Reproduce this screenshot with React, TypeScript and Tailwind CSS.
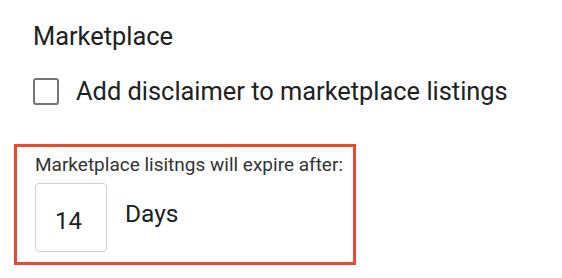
export default function App() {
  return (
    <div className="w-[562px] h-[278px] bg-white font-['Roboto','Liberation_Sans',sans-serif] text-[#212121]">
      <div className="pl-[33px] pt-[22px]">
        <h2 className="text-[25.4px] leading-[28px] font-normal">Marketplace</h2>
        <label className="mt-[27px] flex items-center gap-[17px] cursor-pointer">
          <input
            type="checkbox"
            className="appearance-none w-[26px] h-[27px] border-[2.5px] border-[#757575] rounded-[3px] bg-white"
          />
          <span className="text-[25.4px] leading-[28px]">Add disclaimer to marketplace listings</span>
        </label>
      </div>
      <div className="ml-[14px] mt-[39px] w-[342px] h-[121px] border-[3px] border-[#ea4a2f] pl-[18px] pt-[7px]">
        <p className="text-[19px] leading-[21px] text-[#333333]">Marketplace lisitngs will expire after:</p>
        <div className="mt-[8px] flex items-center gap-[18px]">
          <input
            type="text"
            defaultValue="14"
            className="w-[72px] h-[69px] border border-[#d0d0d0] rounded-[4px] text-left pl-[19px] text-[24px] text-[#212121] pt-[6px] outline-none"
          />
          <span className="text-[24.5px] leading-[28px] -mt-[8px]">Days</span>
        </div>
      </div>
    </div>
  );
}
